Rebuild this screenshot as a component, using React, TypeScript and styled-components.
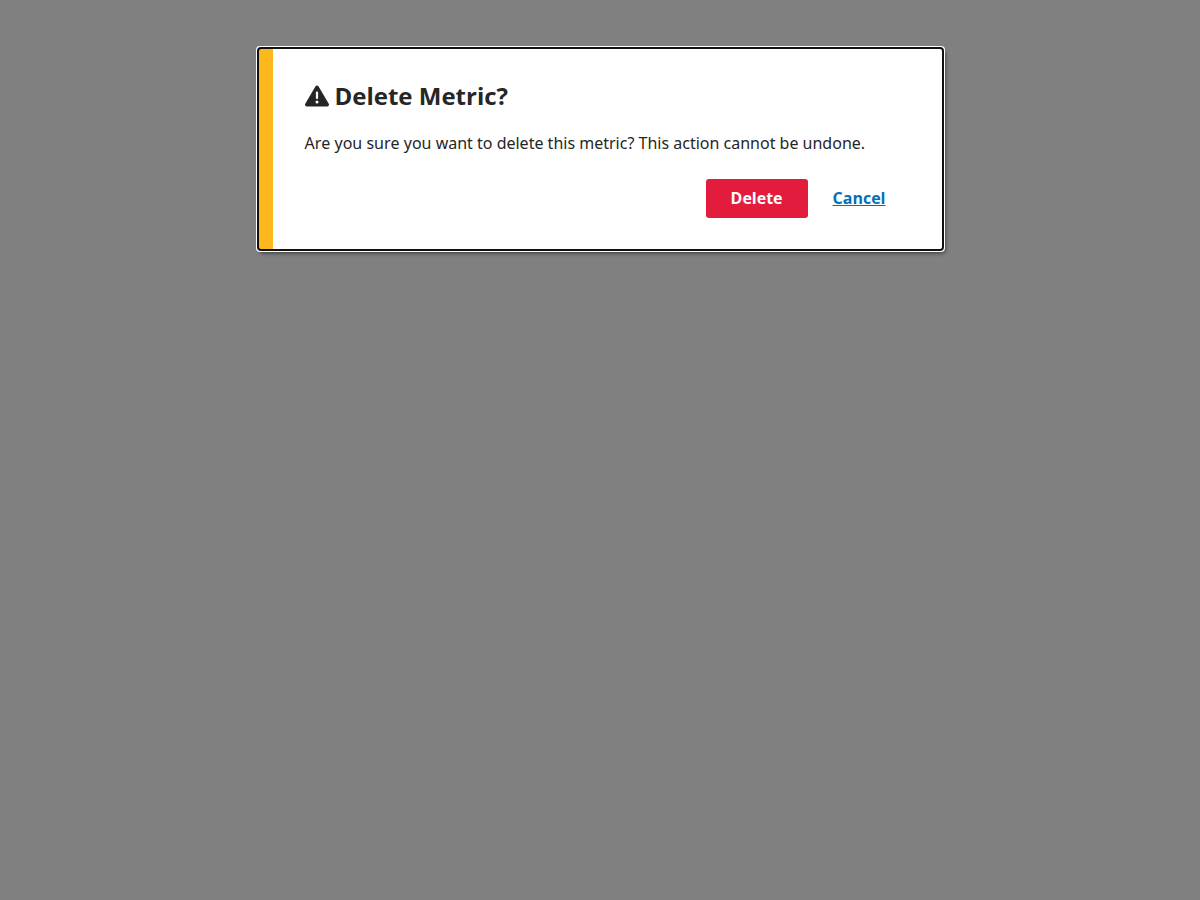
import styled, { createGlobalStyle } from 'styled-components';
import { FaTriangleExclamation } from 'react-icons/fa6';

const GlobalStyle = createGlobalStyle`
  *, *::before, *::after { box-sizing: border-box; }
  body {
    margin: 0;
    background: #808080;
    color: #262626;
    font-family: "Noto Sans", sans-serif;
    font-size: 16px;
    line-height: 24px;
    font-kerning: none;
  }
`;

const Overlay = styled.div`
  display: flex;
  align-items: flex-start;
  justify-content: center;
  min-height: 100vh;
  padding: 48px 16px;
`;

const Dialog = styled.section`
  width: 100%;
  max-width: 685px;
  padding: 32px;
  border-left: 15px solid #fdb81e;
  border-radius: 3px;
  background: #fff;
  box-shadow: 2px 3px 4px rgba(0, 0, 0, 0.6);
  outline: 1px auto -webkit-focus-ring-color;
`;

const Title = styled.h1`
  display: flex;
  align-items: center;
  gap: 6px;
  margin: 0 0 19px;
  font-family: "Open Sans", sans-serif;
  font-size: 24px;
  font-weight: 700;
  line-height: 32px;
`;

const Message = styled.p`
  margin: 0 0 24px;
`;

const Actions = styled.div`
  display: flex;
  justify-content: flex-end;
`;

const Button = styled.button<{ $danger?: boolean }>`
  padding: 7px 25px 8px;
  border: 0;
  border-radius: 3px;
  background: ${({ $danger }) => ($danger ? '#e31c3d' : 'transparent')};
  color: ${({ $danger }) => ($danger ? '#fff' : '#0071bc')};
  font: inherit;
  font-family: "Open Sans", sans-serif;
  font-weight: 700;
  text-decoration: ${({ $danger }) => ($danger ? 'none' : 'underline')};
  cursor: pointer;
`;

export default function App() {
  return (
    <>
      <GlobalStyle />
      <Overlay>
        <Dialog role="dialog" aria-modal="true" aria-labelledby="dialog-title" aria-describedby="dialog-message">
          <Title id="dialog-title">
            <FaTriangleExclamation aria-hidden="true" />
            Delete Metric?
          </Title>
          <Message id="dialog-message">
            Are you sure you want to delete this metric? This action cannot be undone.
          </Message>
          <Actions>
            <Button type="button" $danger>Delete</Button>
            <Button type="button">Cancel</Button>
          </Actions>
        </Dialog>
      </Overlay>
    </>
  );
}
